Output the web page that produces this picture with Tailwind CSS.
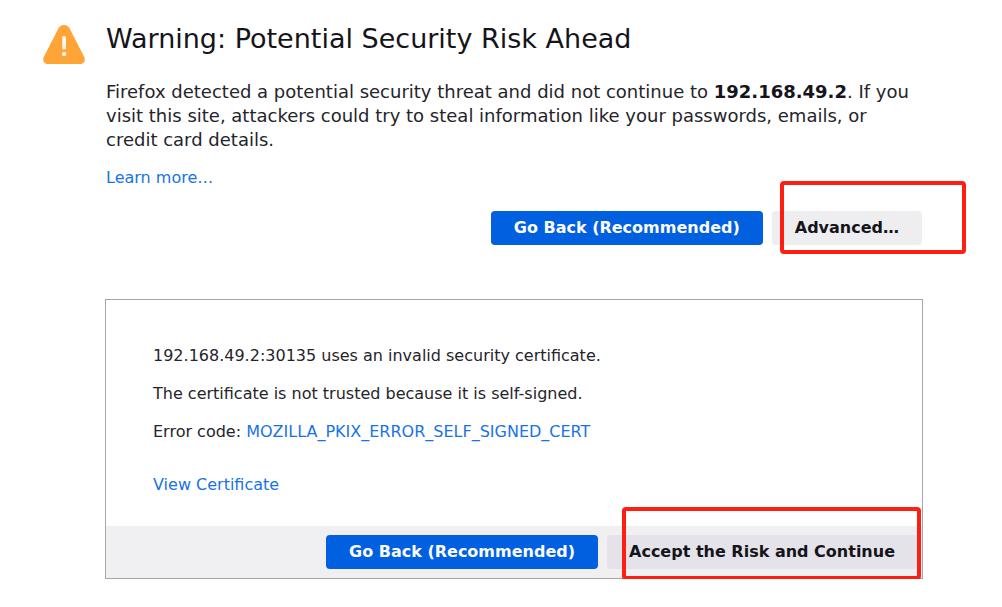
<!DOCTYPE html>
<html lang="en">
<head>
<meta charset="utf-8">
<meta name="viewport" content="width=device-width, initial-scale=1">
<title>Warning: Potential Security Risk Ahead</title>
<script src="https://cdn.jsdelivr.net/npm/@tailwindcss/browser@4"></script>
</head>
<body class="bg-white font-['DejaVu_Sans',sans-serif] text-[16px] leading-6 text-[#25242b]">
<main class="flex gap-[21px] pt-[21px] pr-[79px] pl-[43px]">
  <svg class="mt-[3px] h-[42px] w-[42px] shrink-0" viewBox="0 0 42 42" aria-hidden="true">
    <path fill="#ffa436" d="M21 1c-2.200 0-4.300 1.200-5.400 3.100L.8 33C-1 36.400 1.300 40 4.800 40h32.400c3.500 0 5.800-3.600 4-7L26.400 4.100C25.300 2.200 23.200 1 21 1z"/>
    <rect x="19.200" y="12" width="3.800" height="13.500" rx="1.500" fill="#fff6ea"/>
    <circle cx="21.100" cy="30" r="2.200" fill="#fff6ea"/>
  </svg>
  <div class="min-w-0 flex-1">
    <h1 class="text-[27px] leading-9 text-[#15141a]">Warning: Potential Security Risk Ahead</h1>
    <p class="mt-[23px] pr-2 text-[18px] leading-6">Firefox detected a potential security threat and did not continue to <b class="text-[#15141a]">192.168.49.2</b>. If you visit this site, attackers could try to steal information like your passwords, emails, or credit card details.</p>
    <p class="mt-[14px]"><a href="#" class="text-[#1a73e4]">Learn more…</a></p>
    <div class="mt-[21px] flex justify-end gap-[9px] pr-px">
      <button type="button" class="h-[34px] rounded bg-[#0060df] px-[23px] font-bold text-[#fbfbfe]">Go Back (Recommended)</button>
      <div class="relative">
        <button type="button" class="h-[34px] rounded bg-[#eeeef0] px-[23px] font-bold text-[#15141a]">Advanced…</button>
        <div class="pointer-events-none absolute -top-[30px] -right-[44px] -bottom-[9px] left-[8px] rounded border-4 border-[#ff1e12]"></div>
      </div>
    </div>
    <section class="mt-[54px] -ml-px border border-[#a6a6a8]">
      <div class="flex flex-col gap-[14px] px-[47px] pt-11 pb-[29px]">
        <p>192.168.49.2:30135 uses an invalid security certificate.</p>
        <p>The certificate is not trusted because it is self-signed.</p>
        <p>Error code: <a href="#" class="text-[#1a73e4]">MOZILLA_PKIX_ERROR_SELF_SIGNED_CERT</a></p>
        <p class="mt-[15px]"><a href="#" class="text-[#1a73e4]">View Certificate</a></p>
      </div>
      <div class="flex justify-end gap-[9px] bg-[#f0f0f3] py-[9px] pr-[5px]">
        <button type="button" class="h-[34px] rounded bg-[#0060df] px-[23px] font-bold text-[#fbfbfe]">Go Back (Recommended)</button>
        <div class="relative">
          <button type="button" class="h-[34px] rounded bg-[#e4e3e9] px-[22px] font-bold text-[#15141a]">Accept the Risk and Continue</button>
          <div class="pointer-events-none absolute -top-[28px] -right-[4px] -bottom-[11px] left-[15px] rounded border-4 border-[#ff1e12]"></div>
        </div>
      </div>
    </section>
  </div>
</main>
</body>
</html>
